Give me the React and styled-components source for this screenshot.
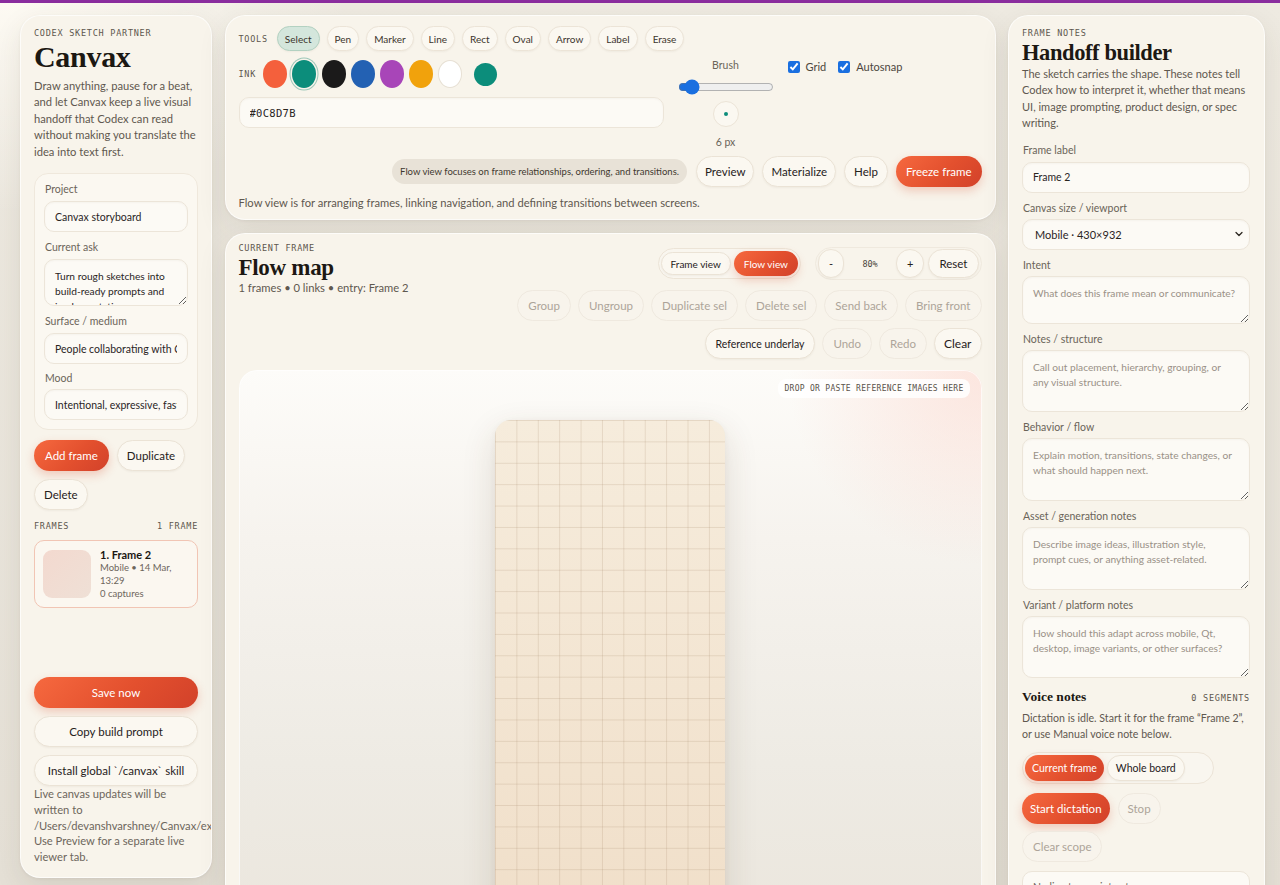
import React from 'react';
import styled, { createGlobalStyle, css } from 'styled-components';
import { ChevronDown } from 'lucide-react';

const sans = `"Lato", "Open Sans", sans-serif`;
const serif = `"Liberation Serif", "DejaVu Serif", serif`;
const mono = `"DejaVu Sans Mono", "Liberation Mono", monospace`;

const Global = createGlobalStyle`
  * { box-sizing: border-box; }
  html, body { margin: 0; padding: 0; height: 100%; overflow: hidden; }
  body { background: #e8e3d9; font-family: ${sans}; color: #221d18; }
  textarea, input, select, button { font-family: ${sans}; }
`;

const TopBar = styled.div`
  height: 3px;
  background: #8a2d9e;
`;

const Shell = styled.div`
  display: grid;
  grid-template-columns: 192px 771px 257px;
  column-gap: 12.5px;
  align-items: start;
  padding: 12px 15px 0 20px;
  height: calc(100vh - 3px);
  background:
    radial-gradient(ellipse 500px 300px at 0% 0%, rgba(255, 252, 245, 0.9), transparent 70%),
    linear-gradient(180deg, #eeeae1 0%, #e5e0d6 100%);
`;

const Panel = styled.section`
  background: #f8f4eb;
  border-radius: 20px;
  border: 1px solid rgba(255, 255, 255, 0.7);
  box-shadow: 0 10px 28px rgba(70, 55, 35, 0.1), 0 1px 3px rgba(70, 55, 35, 0.06);
  overflow: hidden;
`;

const LeftPanel = styled(Panel)`
  height: 863px;
  display: flex;
  flex-direction: column;
  padding: 11px 13px 12px 13px;
  & > * { flex-shrink: 0; }
`;

const CenterCol = styled.div`
  display: flex;
  flex-direction: column;
  gap: 13px;
`;

const ToolPanel = styled(Panel)`
  height: 205px;
  padding: 10px 13px 12px 13px;
  display: flex;
  flex-direction: column;
`;

const MainPanel = styled(Panel)`
  height: 900px;
  padding: 13px 13px;
`;

const RightPanel = styled(Panel)`
  height: 900px;
  padding: 11px 14px 13px 13px;
`;

const Eyebrow = styled.div`
  font-family: ${mono};
  font-size: 8.5px;
  letter-spacing: 0.75px;
  color: #5e574e;
  text-transform: uppercase;
  line-height: 12px;
`;

const Title = styled.h1`
  margin: 2px 0 0;
  font-family: ${serif};
  font-weight: 700;
  font-size: ${(p) => p.$size || 30}px;
  line-height: 1.05;
  color: #1c1813;
  letter-spacing: ${(p) => p.$ls ?? -0.3}px;
`;

const Lead = styled.p`
  margin: ${(p) => p.$mt ?? 2}px 0 0;
  font-size: ${(p) => p.$size || 11.2}px;
  line-height: 16.5px;
  color: #5f584f;
`;

const FieldCard = styled.div`
  margin-top: 13px;
  padding: 8px 9px 9px;
  border-radius: 14px;
  background: #fbf8f1;
  border: 1px solid #efe8dc;
  display: flex;
  flex-direction: column;
`;

const Label = styled.label`
  display: block;
  font-size: 10.5px;
  color: #6b6459;
  line-height: 14px;
  margin: ${(p) => p.$mt ?? 8}px 0 ${(p) => p.$mb ?? 4}px;
  padding-left: 1px;
`;

const fieldBase = css`
  width: 100%;
  border: 1px solid #ece5d9;
  background: #fcfaf5;
  border-radius: 10px;
  color: #2a251f;
  font-size: 10.5px;
  outline: none;
  box-shadow: inset 0 1px 2px rgba(90, 70, 40, 0.04);
`;

const Input = styled.input`
  ${fieldBase}
  display: block;
  height: 31px;
  padding: 0 10px;
  font-family: ${(p) => (p.$mono ? mono : sans)};
  ${(p) => p.$mono && 'letter-spacing: 0.3px;'}
`;

const TextArea = styled.textarea`
  ${fieldBase}
  display: block;
  height: ${(p) => p.$h || 62}px;
  padding: 9px 12px 9px 10px;
  font-size: 10.2px;
  line-height: 15px;
  resize: vertical;
  &::placeholder { color: #9a9187; }
`;

const SelectWrap = styled.div`
  position: relative;
  svg {
    position: absolute;
    right: 5px;
    top: 50%;
    transform: translateY(-50%);
    color: #2a251f;
    pointer-events: none;
  }
`;

const Select = styled.select`
  ${fieldBase}
  display: block;
  appearance: none;
  height: 31px;
  padding: 0 12px;
  font-size: 11px;
`;

const Btn = styled.button`
  flex: none;
  height: ${(p) => p.$h || 31}px;
  padding: 0 ${(p) => p.$px ?? 10}px;
  border-radius: 999px;
  font-size: ${(p) => p.$fs || 11.5}px;
  white-space: nowrap;
  cursor: pointer;
  border: 1px solid #ebe3d6;
  background: #fbf8f1;
  color: #26211b;
  box-shadow: 0 1px 2px rgba(80, 60, 30, 0.05);
  ${(p) => p.$block && 'width: 100%;'}
  ${(p) =>
    p.$variant === 'primary' &&
    css`
      border: none;
      color: #fff;
      background: linear-gradient(135deg, #f6693f 0%, #e3502e 55%, #d2412a 100%);
      box-shadow: 0 4px 10px rgba(214, 77, 42, 0.25);
    `}
  ${(p) =>
    p.$variant === 'ghost' &&
    css`
      color: #ada499;
      background: #f8f4ec;
      border-color: #efe9df;
      box-shadow: none;
    `}
`;

const BtnRow = styled.div`
  display: flex;
  flex-wrap: wrap;
  gap: ${(p) => p.$gap || 8}px;
  margin-top: ${(p) => p.$mt || 0}px;
  margin-bottom: ${(p) => p.$mb || 0}px;
  justify-content: ${(p) => p.$justify || 'flex-start'};
  align-items: center;
`;

const ListHead = styled.div`
  display: flex;
  justify-content: space-between;
  margin-top: 10px;
`;

const FrameCard = styled.div`
  margin-top: 8px;
  border: 1px solid #f1c5b4;
  background: #fbf7f0;
  border-radius: 10px;
  padding: 7px 8px;
  display: flex;
  align-items: center;
  gap: 9px;
`;

const Thumb = styled.div`
  width: 48px;
  height: 48px;
  border-radius: 9px;
  flex: none;
  background: linear-gradient(135deg, #f3d9cf, #efe0d6);
`;

const FrameTitle = styled.div`
  font-weight: 700;
  font-size: 11px;
  line-height: 13px;
  color: #1a1612;
`;

const FrameMeta = styled.div`
  font-size: 9.5px;
  line-height: 13px;
  color: #6d665c;
`;

const BottomStack = styled.div`
  margin-top: auto;
  display: flex;
  flex-direction: column;
  gap: 8px;
`;

const SmallNote = styled.p`
  margin: -8px 0 0;
  font-size: 11.2px;
  line-height: 15.8px;
  color: #6d665c;
`;

const PathLine = styled.span`
  display: block;
  white-space: nowrap;
`;

/* tool panel */
const ToolRow = styled.div`
  display: flex;
  align-items: center;
  gap: 7px;
`;

const RowLabel = styled(Eyebrow)`
  margin-right: 2px;
`;

const ToolPill = styled.button`
  height: 25px;
  padding: 0 7px;
  border-radius: 999px;
  font-size: 10px;
  color: #3b352d;
  border: 1px solid ${(p) => (p.$active ? '#b3d1c1' : '#ece4d7')};
  background: ${(p) => (p.$active ? '#d4e6dc' : '#fbf8f1')};
  box-shadow: 0 1px 2px rgba(80, 60, 30, 0.05);
`;

const MidRow = styled.div`
  display: flex;
  align-items: flex-start;
  margin-top: 8px;
`;

const InkCol = styled.div`
  width: 425px;
  display: flex;
  flex-direction: column;
  gap: 8px;
`;

const InkRow = styled.div`
  display: flex;
  align-items: center;
  gap: 5px;
  height: 30px;
`;

const Swatch = styled.span`
  width: 24px;
  height: 28px;
  border-radius: 50%;
  background: ${(p) => p.$c};
  ${(p) => p.$border && 'border: 1px solid #e7e0d4;'}
  ${(p) => p.$active && 'box-shadow: 0 0 0 1.5px #f8f4eb, 0 0 0 2.5px #9dc6b8;'}
  margin-right: ${(p) => p.$mr || 0}px;
`;

const ColorDot = styled.span`
  width: 23px;
  height: 23px;
  border-radius: 50%;
  background: #0c8d7b;
  margin-left: 7px;
`;

const BrushCol = styled.div`
  width: 96px;
  margin-left: 14px;
  display: flex;
  flex-direction: column;
  align-items: center;
  font-size: 10.5px;
  color: #6b6459;
`;

const Range = styled.input`
  width: 96px;
  margin: 10px 0 8px;
  accent-color: #1a6fe0;
  height: 12px;
`;

const BrushPreview = styled.div`
  width: 26px;
  height: 26px;
  border-radius: 50%;
  border: 1px solid #ece4d7;
  background: #fbf8f1;
  display: grid;
  place-items: center;
  &::after {
    content: '';
    width: 4px;
    height: 4px;
    border-radius: 50%;
    background: #0c8d7b;
  }
`;

const BrushValue = styled.div`
  margin-top: 9px;
`;

const CheckRow = styled.div`
  display: flex;
  gap: 12px;
  margin-left: 14px;
  margin-top: 1px;
`;

const Check = styled.label`
  display: flex;
  align-items: center;
  gap: 6px;
  font-size: 11px;
  color: #4d463d;
  input {
    margin: 0;
    width: 12px;
    height: 12px;
    accent-color: #1a6fe0;
  }
`;

const HintPill = styled.span`
  height: 25px;
  padding: 0 8px;
  border-radius: 999px;
  background: #e8e2d7;
  font-size: 9.5px;
  color: #3f392f;
  display: inline-flex;
  align-items: center;
  margin-right: 1px;
`;

const FootText = styled.p`
  margin: 9px 0 0;
  font-size: 11.2px;
  color: #5f584f;
`;

/* main panel */
const Header = styled.div`
  display: flex;
  justify-content: space-between;
  align-items: flex-start;
`;

const HeaderLeft = styled.div`
  margin-top: -5px;
`;

const Stats = styled.div`
  margin-top: 1px;
  font-size: 11.2px;
  color: #5f584f;
`;

const Controls = styled.div`
  display: flex;
  flex-direction: column;
  align-items: flex-end;
  gap: 7px;
`;

const Segmented = styled.div`
  display: flex;
  align-items: center;
  gap: 3px;
  padding: 2px;
  border-radius: 999px;
  border: 1px solid #ece4d7;
  background: #f9f6ef;
  ${(p) => p.$w && `width: ${p.$w}px;`}
`;

const ZoomGroup = styled.div`
  display: flex;
  align-items: center;
  gap: 4px;
  padding: 1px 2px;
  border-radius: 999px;
  border: 1px solid #efe9de;
  margin-left: 6px;
`;

const ZoomValue = styled.span`
  font-family: ${mono};
  font-size: 8.5px;
  color: #4b453c;
  width: 44px;
  text-align: center;
`;

const Canvas = styled.div`
  position: relative;
  margin-top: 11px;
  height: 560px;
  border-radius: 18px;
  overflow: hidden;
  display: flex;
  justify-content: center;
  padding-top: 50px;
  background:
    radial-gradient(ellipse 260px 260px at 100% 0%, rgba(252, 212, 202, 0.55), transparent 75%),
    linear-gradient(180deg, #fdfcf9 0%, #f6f3ee 30%, #eeebe4 70%, #ebe6dd 100%);
  box-shadow: inset 0 0 0 1px rgba(255, 255, 255, 0.7);
`;

const DropBadge = styled.div`
  position: absolute;
  top: 9px;
  right: 12px;
  padding: 5px 6px;
  border-radius: 8px;
  background: rgba(255, 255, 255, 0.85);
  font-family: ${mono};
  font-size: 8px;
  letter-spacing: 0.3px;
  color: #5a534a;
`;

const Paper = styled.div`
  width: 230px;
  height: 620px;
  border-radius: 16px;
  background-color: #f4e8d6;
  background-image:
    linear-gradient(to right, rgba(160, 130, 100, 0.2) 1px, transparent 1px),
    linear-gradient(to bottom, rgba(160, 130, 100, 0.2) 1px, transparent 1px),
    linear-gradient(180deg, #f6ecdc 0%, #efdcc5 100%);
  background-size: 21.4px 21.4px, 21.4px 21.4px, 100% 100%;
  box-shadow: 0 12px 34px rgba(80, 60, 30, 0.14), 0 2px 6px rgba(80, 60, 30, 0.06);
`;

/* right panel */
const VoiceHead = styled.div`
  display: flex;
  justify-content: space-between;
  align-items: baseline;
  margin-top: 11px;
`;

const VoiceTitle = styled.h3`
  margin: 0;
  font-family: ${serif};
  font-weight: 700;
  font-size: 13.5px;
  color: #1c1813;
`;

const TranscriptBox = styled.div`
  margin-top: 9px;
  border: 1px solid #ece5d9;
  background: #fcfaf5;
  border-radius: 10px;
  padding: 9px 10px;
  font-size: 10.5px;
  color: #6d665c;
  height: 60px;
`;

const tools = ['Select', 'Pen', 'Marker', 'Line', 'Rect', 'Oval', 'Arrow', 'Label', 'Erase'];
const inks = [
  { c: '#f4603c' },
  { c: '#0c8d7b', active: true, mr: 1 },
  { c: '#1b1a1a' },
  { c: '#2361b3' },
  { c: '#a845b8' },
  { c: '#f1a20c' },
  { c: '#ffffff', border: true },
];

export default function App() {
  return (
    <>
      <Global />
      <TopBar />
      <Shell>
        <LeftPanel>
          <Eyebrow>Codex sketch partner</Eyebrow>
          <Title>Canvax</Title>
          <Lead $mt={5}>
            Draw anything, pause for a beat, and let Canvax keep a live visual handoff that Codex can read
            without making you translate the idea into text first.
          </Lead>
          <FieldCard>
            <Label $mt={0} $mb={5}>Project</Label>
            <Input defaultValue="Canvax storyboard" />
            <Label $mb={5}>Current ask</Label>
            <TextArea
              $h={47}
              defaultValue="Turn rough sketches into build-ready prompts and implementation specs"
            />
            <Label $mb={5}>Surface / medium</Label>
            <Input defaultValue="People collaborating with Codex" />
            <Label $mt={7} $mb={4}>Mood</Label>
            <Input defaultValue="Intentional, expressive, fast" />
          </FieldCard>
          <BtnRow $mt={10} $gap={8}>
            <Btn $variant="primary" $px={11}>Add frame</Btn>
            <Btn $px={9}>Duplicate</Btn>
            <Btn $px={9}>Delete</Btn>
          </BtnRow>
          <ListHead>
            <Eyebrow>Frames</Eyebrow>
            <Eyebrow>1 frame</Eyebrow>
          </ListHead>
          <FrameCard>
            <Thumb />
            <div>
              <FrameTitle>1. Frame 2</FrameTitle>
              <FrameMeta>Mobile • 14 Mar,</FrameMeta>
              <FrameMeta>13:29</FrameMeta>
              <FrameMeta>0 captures</FrameMeta>
            </div>
          </FrameCard>
          <BottomStack>
            <Btn $variant="primary" $block>Save now</Btn>
            <Btn $block>Copy build prompt</Btn>
            <Btn $block>Install global `/canvax` skill</Btn>
            <SmallNote>
              Live canvas updates will be written to
              <PathLine>/Users/devanshvarshney/Canvax/exports/live</PathLine>
              Use Preview for a separate live viewer tab.
            </SmallNote>
          </BottomStack>
        </LeftPanel>

        <CenterCol>
          <ToolPanel>
            <ToolRow>
              <RowLabel>Tools</RowLabel>
              {tools.map((t) => (
                <ToolPill key={t} $active={t === 'Select'}>
                  {t}
                </ToolPill>
              ))}
            </ToolRow>
            <MidRow>
              <InkCol>
                <InkRow>
                  <RowLabel>Ink</RowLabel>
                  {inks.map((s, i) => (
                    <Swatch key={i} $c={s.c} $active={s.active} $border={s.border} $mr={s.mr} />
                  ))}
                  <ColorDot />
                </InkRow>
                <Input $mono defaultValue="#0C8D7B" />
              </InkCol>
              <BrushCol>
                <div>Brush</div>
                <Range type="range" min="1" max="60" defaultValue="6" />
                <BrushPreview />
                <BrushValue>6 px</BrushValue>
              </BrushCol>
              <CheckRow>
                <Check>
                  <input type="checkbox" defaultChecked /> Grid
                </Check>
                <Check>
                  <input type="checkbox" defaultChecked /> Autosnap
                </Check>
              </CheckRow>
            </MidRow>
            <BtnRow $justify="flex-end" $gap={8} $mt={8}>
              <HintPill>Flow view focuses on frame relationships, ordering, and transitions.</HintPill>
              <Btn $px={8}>Preview</Btn>
              <Btn $px={8}>Materialize</Btn>
              <Btn $px={9}>Help</Btn>
              <Btn $px={10} $variant="primary">Freeze frame</Btn>
            </BtnRow>
            <FootText>
              Flow view is for arranging frames, linking navigation, and defining transitions between screens.
            </FootText>
          </ToolPanel>

          <MainPanel>
            <Header>
              <HeaderLeft>
                <Eyebrow>Current frame</Eyebrow>
                <Title $size={23}>Flow map</Title>
                <Stats>1 frames • 0 links • entry: Frame 2</Stats>
              </HeaderLeft>
              <Controls>
                <BtnRow $gap={0} $mb={3}>
                  <Segmented>
                    <Btn $h={23} $fs={10} $px={9}>Frame view</Btn>
                    <Btn $h={25} $fs={10} $px={10} $variant="primary">Flow view</Btn>
                  </Segmented>
                  <ZoomGroup>
                    <Btn $h={29} $px={10} $fs={11}>-</Btn>
                    <ZoomValue>80%</ZoomValue>
                    <Btn $h={29} $px={10} $fs={11}>+</Btn>
                    <Btn $h={29} $px={10}>Reset</Btn>
                  </ZoomGroup>
                </BtnRow>
                <BtnRow $gap={7} $justify="flex-end">
                  <Btn $variant="ghost">Group</Btn>
                  <Btn $variant="ghost">Ungroup</Btn>
                  <Btn $variant="ghost">Duplicate sel</Btn>
                  <Btn $variant="ghost">Delete sel</Btn>
                  <Btn $variant="ghost">Send back</Btn>
                  <Btn $variant="ghost">Bring front</Btn>
                </BtnRow>
                <BtnRow $gap={7} $justify="flex-end">
                  <Btn $fs={10.5}>Reference underlay</Btn>
                  <Btn $variant="ghost">Undo</Btn>
                  <Btn $variant="ghost">Redo</Btn>
                  <Btn $px={9} $fs={12}>Clear</Btn>
                </BtnRow>
              </Controls>
            </Header>
            <Canvas>
              <DropBadge>DROP OR PASTE REFERENCE IMAGES HERE</DropBadge>
              <Paper />
            </Canvas>
          </MainPanel>
        </CenterCol>

        <RightPanel>
          <Eyebrow>Frame notes</Eyebrow>
          <Title $size={22.5} $ls={-0.4}>Handoff builder</Title>
          <Lead $mt={1} $size={11}>
            The sketch carries the shape. These notes tell Codex how to interpret it, whether that means UI,
            image prompting, product design, or spec writing.
          </Lead>
          <Label $mt={11} $mb={5}>Frame label</Label>
          <Input defaultValue="Frame 2" />
          <Label>Canvas size / viewport</Label>
          <SelectWrap>
            <Select defaultValue="mobile">
              <option value="mobile">Mobile · 430×932</option>
            </Select>
            <ChevronDown size={12} strokeWidth={2.5} />
          </SelectWrap>
          <Label>Intent</Label>
          <TextArea $h={48} placeholder="What does this frame mean or communicate?" />
          <Label>Notes / structure</Label>
          <TextArea $h={62} placeholder="Call out placement, hierarchy, grouping, or any visual structure." />
          <Label>Behavior / flow</Label>
          <TextArea $h={63} placeholder="Explain motion, transitions, state changes, or what should happen next." />
          <Label>Asset / generation notes</Label>
          <TextArea $h={63} placeholder="Describe image ideas, illustration style, prompt cues, or anything asset-related." />
          <Label>Variant / platform notes</Label>
          <TextArea $h={62} placeholder="How should this adapt across mobile, Qt, desktop, image variants, or other surfaces?" />
          <VoiceHead>
            <VoiceTitle>Voice notes</VoiceTitle>
            <Eyebrow>0 segments</Eyebrow>
          </VoiceHead>
          <Lead $mt={5} $size={10.6}>
            Dictation is idle. Start it for the frame “Frame 2”, or use Manual voice note below.
          </Lead>
          <BtnRow $mt={9}>
            <Segmented $w={192}>
              <Btn $h={26} $fs={10.5} $px={7} $variant="primary">Current frame</Btn>
              <Btn $h={26} $fs={10.5} $px={8}>Whole board</Btn>
            </Segmented>
          </BtnRow>
          <BtnRow $mt={9} $gap={8}>
            <Btn $variant="primary" $px={8}>Start dictation</Btn>
            <Btn $variant="ghost" $px={9}>Stop</Btn>
          </BtnRow>
          <BtnRow $mt={7}>
            <Btn $variant="ghost">Clear scope</Btn>
          </BtnRow>
          <TranscriptBox>No live transcript yet.</TranscriptBox>
        </RightPanel>
      </Shell>
    </>
  );
}
